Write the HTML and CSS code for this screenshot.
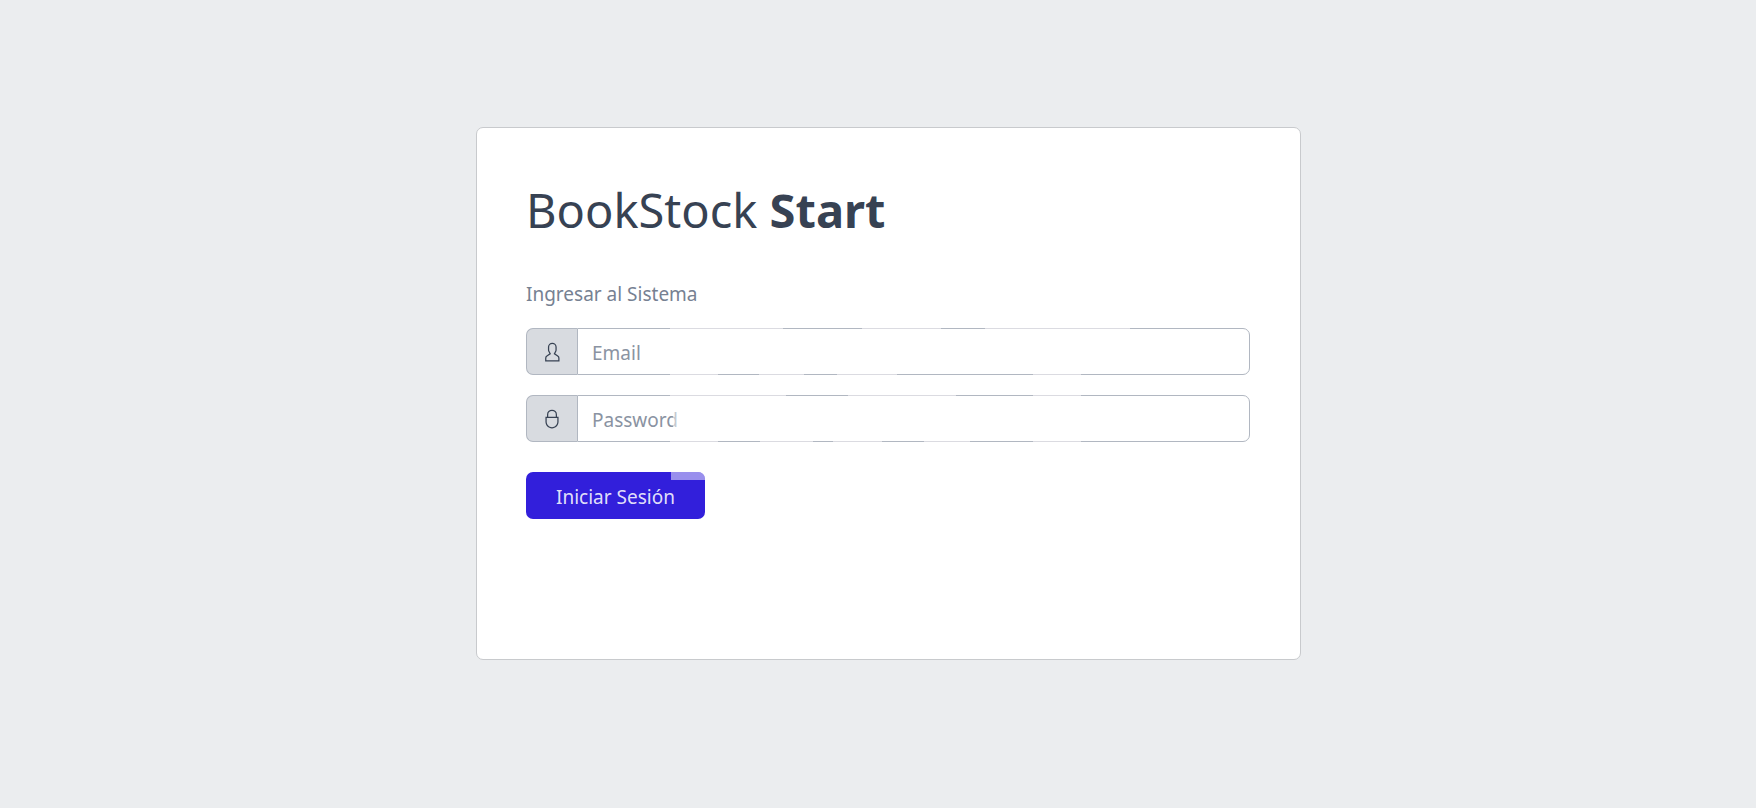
FILE: index.html
```
<!DOCTYPE html>
<html lang="es">
<head>
    <meta charset="UTF-8" />
    <meta name="viewport" content="width=device-width, initial-scale=1" />
    <title>BookStock</title>
    <link rel="stylesheet" href="styles.css">
</head>
<body>
<main class="login-page">
    <div class="card">
        <form class="login-form">
            <h1>BookStock <strong>Start</strong></h1>
            <p class="subtitle">Ingresar al Sistema</p>

            <div class="input-group email-group">
                <label class="addon" for="email" aria-label="Email">
                    <svg class="icon" viewBox="0 0 512 512" aria-hidden="true">
                        <path d="M411.6,343.656l-72.823-47.334,27.455-50.334A80.23,80.23,0,0,0,376,207.681V128a112,112,0,0,0-224,0v79.681a80.236,80.236,0,0,0,9.768,38.308l27.455,50.333L116.4,343.656A79.725,79.725,0,0,0,80,410.732V496H448V410.732A79.727,79.727,0,0,0,411.6,343.656ZM416,464H112V410.732a47.836,47.836,0,0,1,21.841-40.246l97.66-63.479-41.64-76.341A48.146,48.146,0,0,1,184,207.681V128a80,80,0,0,1,160,0v79.681a48.146,48.146,0,0,1-5.861,22.985L296.5,307.007l97.662,63.479h0A47.836,47.836,0,0,1,416,410.732Z"/>
                    </svg>
                </label>
                <input type="email" id="email" name="email" placeholder="Email" required>
            </div>

            <div class="input-group password-group">
                <label class="addon" for="password" aria-label="Password">
                    <svg class="icon" viewBox="0 0 512 512" aria-hidden="true">
                        <path d="M384,200V144a128,128,0,0,0-256,0v56H88V328c0,92.635,75.364,168,168,168s168-75.365,168-168V200ZM160,144a96,96,0,0,1,192,0v56H160ZM392,328c0,74.99-61.01,136-136,136s-136-61.01-136-136V232H392Z"/>
                    </svg>
                </label>
                <input type="password" id="password" name="password" placeholder="Password" required>
            </div>

            <button type="submit" class="btn-primary">Iniciar Sesión</button>
        </form>
    </div>
</main>
</body>
</html>
```

FILE: styles.css
```
* {
    box-sizing: border-box;
}

body {
    margin: 0;
    font-family: 'Segoe UI', 'Noto Sans', 'Open Sans', sans-serif;
    font-size: 19px;
    line-height: 32px;
    background-color: #ebedef;
    color: #374253;
}

.login-page {
    min-height: 100vh;
    display: flex;
    align-items: center;
    justify-content: center;
    padding: 0 0 21px 21px;
}

.card {
    width: 100%;
    max-width: 825px;
    background-color: #fff;
    border: 1px solid #c8cacd;
    border-radius: 7px;
}

.login-form {
    padding: 50px 50px 140px 49px;
}

h1 {
    margin: 0 0 36px;
    font-size: 47px;
    font-weight: 400;
    line-height: 64px;
}

h1 strong {
    font-weight: 700;
}

.subtitle {
    margin: 0 0 18px;
    color: #768192;
}

.input-group {
    position: relative;
    display: flex;
    margin-bottom: 20px;
}

.addon {
    display: flex;
    align-items: center;
    padding: 0 15px;
    background-color: #d8dbe0;
    border: 1px solid #b1b7c1;
    border-right: none;
    border-radius: 7px 0 0 7px;
}

.icon {
    width: 20px;
    height: 20px;
    fill: #374253;
}

input {
    flex: 1;
    min-width: 0;
    height: 47px;
    padding: 2px 14px 0;
    font-family: inherit;
    font-size: 19px;
    color: #768192;
    background-color: #fff;
    border: 1px solid #b1b7c1;
    border-radius: 0 7px 7px 0;
}

input::placeholder {
    color: #8a93a2;
    opacity: 1;
}

/* lighter stretches along the top and bottom borders */
.input-group::before,
.input-group::after {
    content: "";
    position: absolute;
    left: 0;
    right: 0;
    height: 1px;
    pointer-events: none;
}

.input-group::before {
    top: 0;
}

.input-group::after {
    bottom: 0;
}

.email-group::before {
    background: linear-gradient(to right, transparent 144px, #dbdbe1 144px 257px, transparent 257px 336px, #dbdbe1 336px 415px, transparent 415px 459px, #dbdbe1 459px 604px, transparent 604px);
}

.email-group::after {
    background: linear-gradient(to right, transparent 144px, #dbdbe1 144px 192px, transparent 192px 233px, #dbdbe1 233px 278px, transparent 278px 311px, #dbdbe1 311px 371px, transparent 371px 507px, #dbdbe1 507px 555px, transparent 555px);
}

/* the second layer fades the end of the placeholder */
.password-group::before {
    height: 40px;
    background:
        linear-gradient(to right, transparent 144px, #dbdbe1 144px 260px, transparent 260px 322px, #dbdbe1 322px 430px, transparent 430px 507px, #dbdbe1 507px 555px, transparent 555px) 0 0 / 100% 1px no-repeat,
        linear-gradient(rgba(255,255,255,0.5), rgba(255,255,255,0.5)) 147px 12px / 8px 24px no-repeat;
}

.password-group::after {
    background: linear-gradient(to right, transparent 144px, #dbdbe1 144px 192px, transparent 192px 234px, #dbdbe1 234px 287px, transparent 287px 307px, #dbdbe1 307px 356px, transparent 356px 398px, #dbdbe1 398px 444px, transparent 444px 507px, #dbdbe1 507px 555px, transparent 555px);
}

.btn-primary {
    position: relative;
    overflow: hidden;
    display: block;
    height: 47px;
    margin-top: 30px;
    padding: 2px 30px 0;
    font-family: inherit;
    font-size: 19px;
    color: rgba(255,255,255,0.87);
    background-color: #321fdb;
    border: none;
    border-radius: 7px;
    cursor: pointer;
}

.btn-primary::after {
    content: "";
    position: absolute;
    top: 0;
    right: 0;
    width: 34px;
    height: 8px;
    background-color: rgba(255,255,255,0.5);
}
```
